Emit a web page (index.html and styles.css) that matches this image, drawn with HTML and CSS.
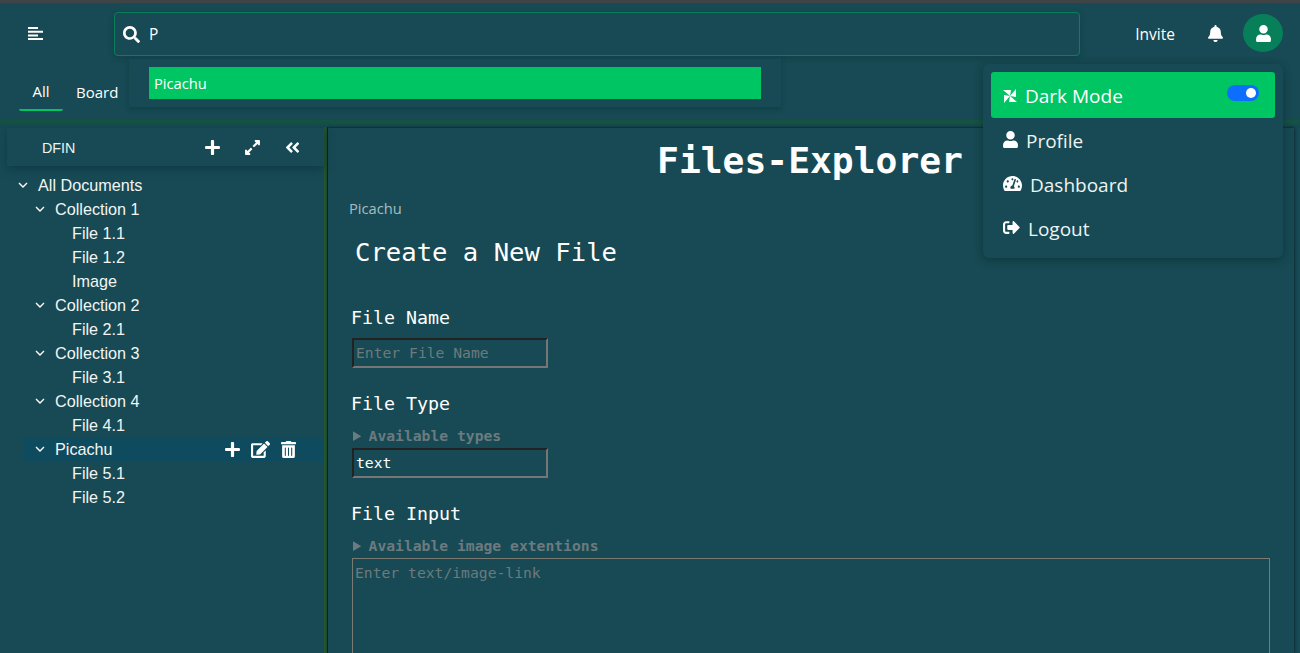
FILE: index.html
```html
<!DOCTYPE html>
<html lang="en">
<head>
<meta charset="utf-8">
<title>Files-Explorer</title>
<link rel="stylesheet" href="styles.css">
</head>
<body>
<div class="page">
  <header class="topbar">
    <button class="menu-btn" aria-label="Menu">
      <svg class="menu-icon" viewBox="0 0 15 13"><path d="M0 0h10v2H0zM0 3.7h15v2H0zM0 7.4h10v2H0zM0 11h15v2H0z" fill="#fff"/></svg>
    </button>
    <div class="search">
      <svg class="ic-search" viewBox="0 0 512 512"><path fill="#fff" d="M505 442.7L405.3 343c-4.5-4.5-10.6-7-17-7H372c27.6-35.3 44-79.7 44-128C416 93.1 322.9 0 208 0S0 93.1 0 208s93.1 208 208 208c48.3 0 92.7-16.4 128-44v16.3c0 6.4 2.5 12.5 7 17l99.7 99.7c9.4 9.4 24.6 9.4 33.9 0l28.3-28.3c9.4-9.4 9.4-24.6.1-34zM208 336c-70.7 0-128-57.2-128-128 0-70.7 57.2-128 128-128 70.7 0 128 57.2 128 128 0 70.7-57.2 128-128 128z"/></svg>
      <span class="search-text">P</span>
    </div>
    <div class="top-actions">
      <span class="invite">Invite</span>
      <svg class="ic-bell" viewBox="0 0 448 512"><path fill="#fff" d="M224 512c35.32 0 63.97-28.65 63.97-64H160.03c0 35.35 28.65 64 63.97 64zm215.39-149.71c-19.32-20.76-55.47-51.99-55.47-154.29 0-77.7-54.48-139.9-127.94-155.16V32c0-17.67-14.32-32-31.98-32s-31.98 14.33-31.98 32v20.84C118.56 68.1 64.08 130.3 64.08 208c0 102.3-36.15 133.53-55.47 154.29-6 6.45-8.66 14.16-8.61 21.71.11 16.4 12.98 32 32.1 32h383.8c19.12 0 32-15.6 32.1-32 .05-7.55-2.61-15.27-8.61-21.71z"/></svg>
      <span class="avatar">
        <svg class="ic-user" viewBox="0 0 448 512"><path fill="#fff" d="M224 256c70.7 0 128-57.3 128-128S294.7 0 224 0 96 57.3 96 128s57.3 128 128 128zm89.6 32h-16.7c-22.2 10.2-46.9 16-72.9 16s-50.6-5.8-72.9-16h-16.7C60.2 288 0 348.2 0 422.4V464c0 26.5 21.5 48 48 48h352c26.5 0 48-21.5 48-48v-41.6c0-74.2-60.2-134.4-134.4-134.4z"/></svg>
      </span>
    </div>
  </header>

  <nav class="tabs">
    <span class="tab tab-active">All</span>
    <span class="tab">Board</span>
  </nav>

  <div class="content">
    <aside class="sidebar">
      <div class="side-head">
        <span class="side-title">DFIN</span>
        <div class="side-tools">
          <svg class="ic-tool" viewBox="0 0 448 512"><path fill="#fff" d="M416 208H272V64c0-17.67-14.33-32-32-32h-32c-17.67 0-32 14.33-32 32v144H32c-17.67 0-32 14.33-32 32v32c0 17.67 14.33 32 32 32h144v144c0 17.67 14.33 32 32 32h32c17.67 0 32-14.33 32-32V304h144c17.67 0 32-14.33 32-32v-32c0-17.67-14.33-32-32-32z"/></svg>
          <svg class="ic-tool" viewBox="0 0 448 512"><path fill="#fff" d="M212.686 315.314L120 408l32.922 31.029c15.12 15.12 4.412 40.971-16.97 40.971h-112C10.697 480 0 469.255 0 456V344c0-21.382 25.803-32.09 40.922-16.971L72 360l92.686-92.686c6.248-6.248 16.379-6.248 22.627 0l25.373 25.373c6.249 6.248 6.249 16.378 0 22.627zm22.628-118.628L328 104l-32.922-31.029C279.958 57.851 290.666 32 312.048 32h112C437.303 32 448 42.745 448 56v112c0 21.382-25.803 32.09-40.922 16.971L376 152l-92.686 92.686c-6.248 6.248-16.379 6.248-22.627 0l-25.373-25.373c-6.249-6.248-6.249-16.378 0-22.627z"/></svg>
          <svg class="ic-tool" viewBox="0 0 448 512"><path fill="#fff" d="M223.7 239l136-136c9.4-9.4 24.6-9.4 33.9 0l22.6 22.6c9.4 9.4 9.4 24.6 0 33.9L319.9 256l96.4 96.4c9.4 9.4 9.4 24.6 0 33.9L393.7 409c-9.4 9.4-24.6 9.4-33.9 0l-136-136c-9.5-9.4-9.5-24.6-.1-34zm-192 34l136 136c9.4 9.4 24.6 9.4 33.9 0l22.6-22.6c9.4-9.4 9.4-24.6 0-33.9L127.9 256l96.4-96.4c9.4-9.4 9.4-24.6 0-33.9L201.7 103c-9.4-9.4-24.6-9.4-33.9 0l-136 136c-9.5 9.4-9.5 24.6-.1 34z"/></svg>
        </div>
      </div>
      <ul class="tree">
        <li class="row lvl0"><svg class="chev" viewBox="0 0 10 6"><path d="M1 1l4 4 4-4" fill="none" stroke="#fff" stroke-width="1.4"/></svg>All Documents</li>
        <li class="row lvl1"><svg class="chev" viewBox="0 0 10 6"><path d="M1 1l4 4 4-4" fill="none" stroke="#fff" stroke-width="1.4"/></svg>Collection 1</li>
        <li class="row lvl2">File 1.1</li>
        <li class="row lvl2">File 1.2</li>
        <li class="row lvl2">Image</li>
        <li class="row lvl1"><svg class="chev" viewBox="0 0 10 6"><path d="M1 1l4 4 4-4" fill="none" stroke="#fff" stroke-width="1.4"/></svg>Collection 2</li>
        <li class="row lvl2">File 2.1</li>
        <li class="row lvl1"><svg class="chev" viewBox="0 0 10 6"><path d="M1 1l4 4 4-4" fill="none" stroke="#fff" stroke-width="1.4"/></svg>Collection 3</li>
        <li class="row lvl2">File 3.1</li>
        <li class="row lvl1"><svg class="chev" viewBox="0 0 10 6"><path d="M1 1l4 4 4-4" fill="none" stroke="#fff" stroke-width="1.4"/></svg>Collection 4</li>
        <li class="row lvl2">File 4.1</li>
        <li class="row lvl1 row-active"><svg class="chev" viewBox="0 0 10 6"><path d="M1 1l4 4 4-4" fill="none" stroke="#fff" stroke-width="1.4"/></svg>Picachu
          <span class="row-tools">
            <svg class="ic-row" viewBox="0 0 448 512"><path fill="#fff" d="M416 208H272V64c0-17.67-14.33-32-32-32h-32c-17.67 0-32 14.33-32 32v144H32c-17.67 0-32 14.33-32 32v32c0 17.67 14.33 32 32 32h144v144c0 17.67 14.33 32 32 32h32c17.67 0 32-14.33 32-32V304h144c17.67 0 32-14.33 32-32v-32c0-17.67-14.33-32-32-32z"/></svg>
            <svg class="ic-edit" viewBox="0 0 576 512"><path fill="#fff" d="M402.6 83.2l90.2 90.2c3.8 3.8 3.8 10 0 13.8L274.4 405.6l-92.8 10.3c-12.4 1.4-22.9-9.1-21.5-21.5l10.3-92.8L388.8 83.2c3.8-3.8 10-3.8 13.8 0zm162-22.9l-48.8-48.8c-15.2-15.2-39.9-15.2-55.2 0l-35.4 35.4c-3.8 3.8-3.8 10 0 13.8l90.2 90.2c3.8 3.8 10 3.8 13.8 0l35.4-35.4c15.2-15.3 15.2-40 0-55.2zM384 346.2V448H64V128h229.8c3.2 0 6.2-1.3 8.5-3.5l40-40c7.6-7.6 2.2-20.5-8.5-20.5H48C21.5 64 0 85.5 0 112v352c0 26.5 21.5 48 48 48h352c26.5 0 48-21.5 48-48V306.2c0-10.7-12.9-16-20.5-8.5l-40 40c-2.2 2.3-3.5 5.3-3.5 8.5z"/></svg>
            <svg class="ic-row" viewBox="0 0 448 512"><path fill="#fff" d="M32 464a48 48 0 0 0 48 48h288a48 48 0 0 0 48-48V128H32zm272-256a16 16 0 0 1 32 0v224a16 16 0 0 1-32 0zm-96 0a16 16 0 0 1 32 0v224a16 16 0 0 1-32 0zm-96 0a16 16 0 0 1 32 0v224a16 16 0 0 1-32 0zM432 32H312l-9.4-18.7A24 24 0 0 0 281.1 0H166.8a23.72 23.72 0 0 0-21.4 13.3L136 32H16A16 16 0 0 0 0 48v32a16 16 0 0 0 16 16h416a16 16 0 0 0 16-16V48a16 16 0 0 0-16-16z"/></svg>
          </span>
        </li>
        <li class="row lvl2">File 5.1</li>
        <li class="row lvl2">File 5.2</li>
      </ul>
    </aside>

    <main class="main">
      <h1 class="title">Files-Explorer</h1>
      <div class="crumb">Picachu</div>
      <h2 class="form-title">Create a New File</h2>
      <form class="form">
        <label class="label label-name">File Name</label>
        <input class="field field-name" type="text" placeholder="Enter File Name">
        <label class="label label-type">File Type</label>
        <details class="hint"><summary>Available types</summary></details>
        <input class="field" type="text" value="text">
        <label class="label label-input">File Input</label>
        <details class="hint"><summary>Available image extentions</summary></details>
        <textarea class="area" placeholder="Enter text/image-link"></textarea>
      </form>
    </main>
  </div>

  <div class="suggest">
    <div class="suggest-item">Picachu</div>
  </div>

  <div class="dropdown">
    <div class="dd-item dd-active">
      <svg class="ic-dark" viewBox="0 0 14 14"><path fill="#fff" d="M0 1h8L7 7zM13 0v8L7 7zM14 13H6l1-6zM1 14V6l6 1z"/></svg>
      <span class="dd-label">Dark Mode</span>
      <span class="toggle"><span class="knob"></span></span>
    </div>
    <div class="dd-item">
      <svg class="ic-dd-user" viewBox="0 0 448 512"><path fill="#fff" d="M224 256c70.7 0 128-57.3 128-128S294.7 0 224 0 96 57.3 96 128s57.3 128 128 128zm89.6 32h-16.7c-22.2 10.2-46.9 16-72.9 16s-50.6-5.8-72.9-16h-16.7C60.2 288 0 348.2 0 422.4V464c0 26.5 21.5 48 48 48h352c26.5 0 48-21.5 48-48v-41.6c0-74.2-60.2-134.4-134.4-134.4z"/></svg>
      <span>Profile</span>
    </div>
    <div class="dd-item">
      <svg class="ic-dash" viewBox="0 0 576 512"><path fill="#fff" d="M288 32C128.94 32 0 160.94 0 320c0 52.8 14.25 102.26 39.06 144.8 5.61 9.62 16.3 15.2 27.44 15.2h443c11.14 0 21.83-5.58 27.44-15.2C561.75 422.26 576 372.8 576 320c0-159.06-128.94-288-288-288zm0 64c14.71 0 26.58 10.13 30.32 23.65-1.11 2.26-2.64 4.23-3.45 6.67l-9.22 27.67c-5.13 3.49-10.97 6.01-17.64 6.01-17.67 0-32-14.33-32-32S270.33 96 288 96zM96 384c-17.67 0-32-14.33-32-32s14.33-32 32-32 32 14.33 32 32-14.33 32-32 32zm48-160c-17.67 0-32-14.33-32-32s14.33-32 32-32 32 14.33 32 32-14.33 32-32 32zm246.77-72.41l-61.33 184C343.13 347.33 352 364.54 352 384c0 11.72-3.38 22.55-8.88 32H232.88c-5.5-9.45-8.88-20.28-8.88-32 0-33.94 26.5-61.43 59.9-63.59l61.34-184.01c4.17-12.56 17.73-19.45 30.36-15.17 12.57 4.19 19.35 17.79 15.17 30.36zm14.66 57.2l15.52-46.55c3.47-1.29 7.13-2.23 11.05-2.23 17.67 0 32 14.33 32 32s-14.33 32-32 32c-11.38-.01-20.89-6.28-26.57-15.22zM480 384c-17.67 0-32-14.33-32-32s14.33-32 32-32 32 14.33 32 32-14.33 32-32 32z"/></svg>
      <span>Dashboard</span>
    </div>
    <div class="dd-item">
      <svg class="ic-logout" viewBox="0 0 512 512"><path fill="#fff" d="M497 273L329 441c-15 15-41 4.5-41-17v-96H152c-13.3 0-24-10.7-24-24v-96c0-13.3 10.7-24 24-24h136V88c0-21.4 25.9-32 41-17l168 168c9.3 9.4 9.3 24.6 0 34zM192 436v-40c0-6.6-5.4-12-12-12H96c-17.7 0-32-14.3-32-32V160c0-17.7 14.3-32 32-32h84c6.6 0 12-5.4 12-12V76c0-6.6-5.4-12-12-12H96c-53 0-96 43-96 96v192c0 53 43 96 96 96h84c6.6 0 12-5.4 12-12z"/></svg>
      <span>Logout</span>
    </div>
  </div>
</div>
</body>
</html>
```
FILE: styles.css
```css
* { box-sizing: border-box; }
html, body { margin: 0; height: 100%; overflow: hidden; }
body { background: #174a54; color: #fff; font-family: "Open Sans", "Noto Sans", sans-serif; }
.page { position: relative; width: 1300px; height: 653px; overflow: hidden; border-top: 3px solid #3f4446; }

.topbar { display: flex; align-items: center; height: 60px; padding: 0 17px 0 28px; background: #174a54; box-shadow: 0 1px 3px rgba(0,40,30,.45); position: relative; }
.menu-btn { width: 86px; padding: 0; border: 0; background: none; display: flex; align-items: center; }
.menu-icon { width: 15px; height: 13px; display: block; }
.search { width: 966px; height: 44px; margin-top: 2px; border: 1px solid #07805a; border-radius: 4px; display: flex; align-items: center; padding-left: 8px; box-shadow: 0 2px 6px rgba(0,40,40,.25); }
.ic-search { width: 17px; height: 17px; }
.search-text { margin-left: 9px; font-size: 15.5px; }
.top-actions { flex: 1; display: flex; align-items: center; justify-content: flex-end; }
.invite { font-size: 15.5px; margin: 2px 33px 0 0; }
.ic-bell { width: 15px; height: 17px; margin-right: 20px; }
.avatar { width: 40px; height: 38px; border-radius: 50%; background: #07805a; display: flex; align-items: center; justify-content: center; }
.ic-user { width: 15px; height: 17px; }

.tabs { display: flex; height: 57px; padding: 0 0 0 19px; background: #174a54; box-shadow: 0 4px 3px rgba(20,90,50,.6); position: relative; }
.tab { padding: 19px 13px 0; font-size: 15px; }
.tab-active { width: 44px; height: 48px; padding: 18px 0 0; text-align: center; border-bottom: 2px solid #00c563; border-radius: 2px; }

.content { display: flex; height: 533px; }
.sidebar { width: 328px; margin-top: 7px; padding-top: 1px; border-right: 1px solid #0e2c2c; box-shadow: inset -3px 0 0 #24572f; }
.side-head { display: flex; align-items: center; height: 38px; margin-left: 7px; width: 317px; padding-left: 35px; background: #174a54; box-shadow: 0 3px 8px rgba(10,50,60,.6); }
.side-title { font: 14.3px "Liberation Sans", Arial, sans-serif; color: #eef3f3; margin-top: 1px; }
.side-tools { margin-left: auto; display: flex; align-items: center; gap: 25px; padding-right: 24px; }
.ic-tool { width: 15px; height: 17px; display: block; }
.tree { list-style: none; margin: 7px 0 0; padding: 0; font: 16.2px "Liberation Sans", Arial, sans-serif; color: #f2f5f5; }
.row { display: flex; align-items: center; height: 24px; width: 324px; }
.chev { width: 10px; height: 6px; margin-right: 10px; flex: none; }
.lvl0 { padding-left: 18px; }
.lvl1 { padding-left: 35px; }
.lvl2 { padding-left: 72px; }
.row-active { margin-left: 24px; width: 300px; padding-left: 11px; background: #0f4b5e; }
.row-tools { margin-left: auto; display: flex; align-items: center; gap: 11px; padding-right: 28px; }
.ic-row { width: 15px; height: 17px; display: block; }
.ic-edit { width: 19px; height: 17px; display: block; }

.main { width: 966px; margin-top: 8px; padding: 0 22px; box-shadow: 0 0 3px #061414; font-family: "DejaVu Sans Mono", "Liberation Mono", monospace; }
.title { margin: 11px 0 0; padding-right: 2px; height: 44px; line-height: 44px; font-size: 36.3px; font-weight: 700; text-align: center; }
.crumb { font: 14.7px "Open Sans", "Noto Sans", sans-serif; color: #a9bcc0; margin: 15px 0 0 -1px; height: 20px; line-height: 20px; }
.form-title { margin: 16px 0 0 5px; height: 36px; line-height: 36px; font-size: 25.6px; font-weight: 400; }
.form { display: flex; flex-direction: column; align-items: flex-start; padding-left: 2px; }
.label { font-size: 18.3px; font-weight: 400; height: 24px; line-height: 24px; margin-left: -1px; }
.label-name { margin-top: 36px; }
.label-type { margin-top: 24px; }
.label-input { margin-top: 24px; }
.field { width: 196px; height: 30px; padding: 0 2px 2px; border: 2px solid; border-color: #222 #767676 #767676 #222; background: transparent; color: #fff; font: 14.7px "DejaVu Sans Mono", "Liberation Mono", monospace; outline: 0; margin-top: 4px; }
.field-name { margin-top: 8px; }
.field::placeholder, .area::placeholder { color: #6d7a7d; opacity: 1; }
.hint { margin-top: 11px; height: 17px; line-height: 17px; color: #6b7b7f; font-size: 14.7px; font-weight: 700; }
.hint summary { padding-left: 1px; }
.area { width: 918px; height: 120px; margin-top: 4px; padding: 5px 2px; border: 1px solid #7a7a72; background: transparent; font: 14.7px "DejaVu Sans Mono", "Liberation Mono", monospace; color: #fff; resize: none; outline: 0; }

.suggest { position: absolute; left: 129px; top: 56px; width: 652px; height: 48px; padding: 8px 20px; background: #174a54; box-shadow: 0 2px 5px rgba(0,40,40,.35); }
.suggest-item { height: 32px; width: 612px; padding-left: 5px; line-height: 33px; background: #00c563; font-size: 14.7px; }

.dropdown { position: absolute; left: 983px; top: 61px; width: 300px; height: 194px; padding: 8px; border-radius: 6px; background: #174a54; box-shadow: 0 2px 8px rgba(0,30,30,.45); font-size: 19px; }
.dd-item { display: flex; align-items: center; height: 44px; padding-left: 12px; color: #eef3f3; }
.dd-active { height: 46px; margin-bottom: 1px; border-radius: 3px; background: #00c563; color: #fff; }
.dd-label { margin-top: 2px; }
.ic-dark { width: 14px; height: 14px; margin-right: 8px; margin-top: 2px; }
.toggle { margin-left: auto; margin-right: 16px; width: 32px; height: 16px; margin-top: -4px; border-radius: 8px; background: #0d6efd; display: flex; align-items: center; justify-content: flex-end; padding-right: 3px; }
.knob { width: 10px; height: 10px; border-radius: 50%; background: #fff; }
.ic-dd-user { width: 15px; height: 17px; margin-right: 8px; margin-top: -4px; }
.ic-dash { width: 19px; height: 17px; margin-right: 8px; margin-top: -4px; }
.ic-logout { width: 17px; height: 17px; margin-right: 8px; margin-top: -4px; }
```
